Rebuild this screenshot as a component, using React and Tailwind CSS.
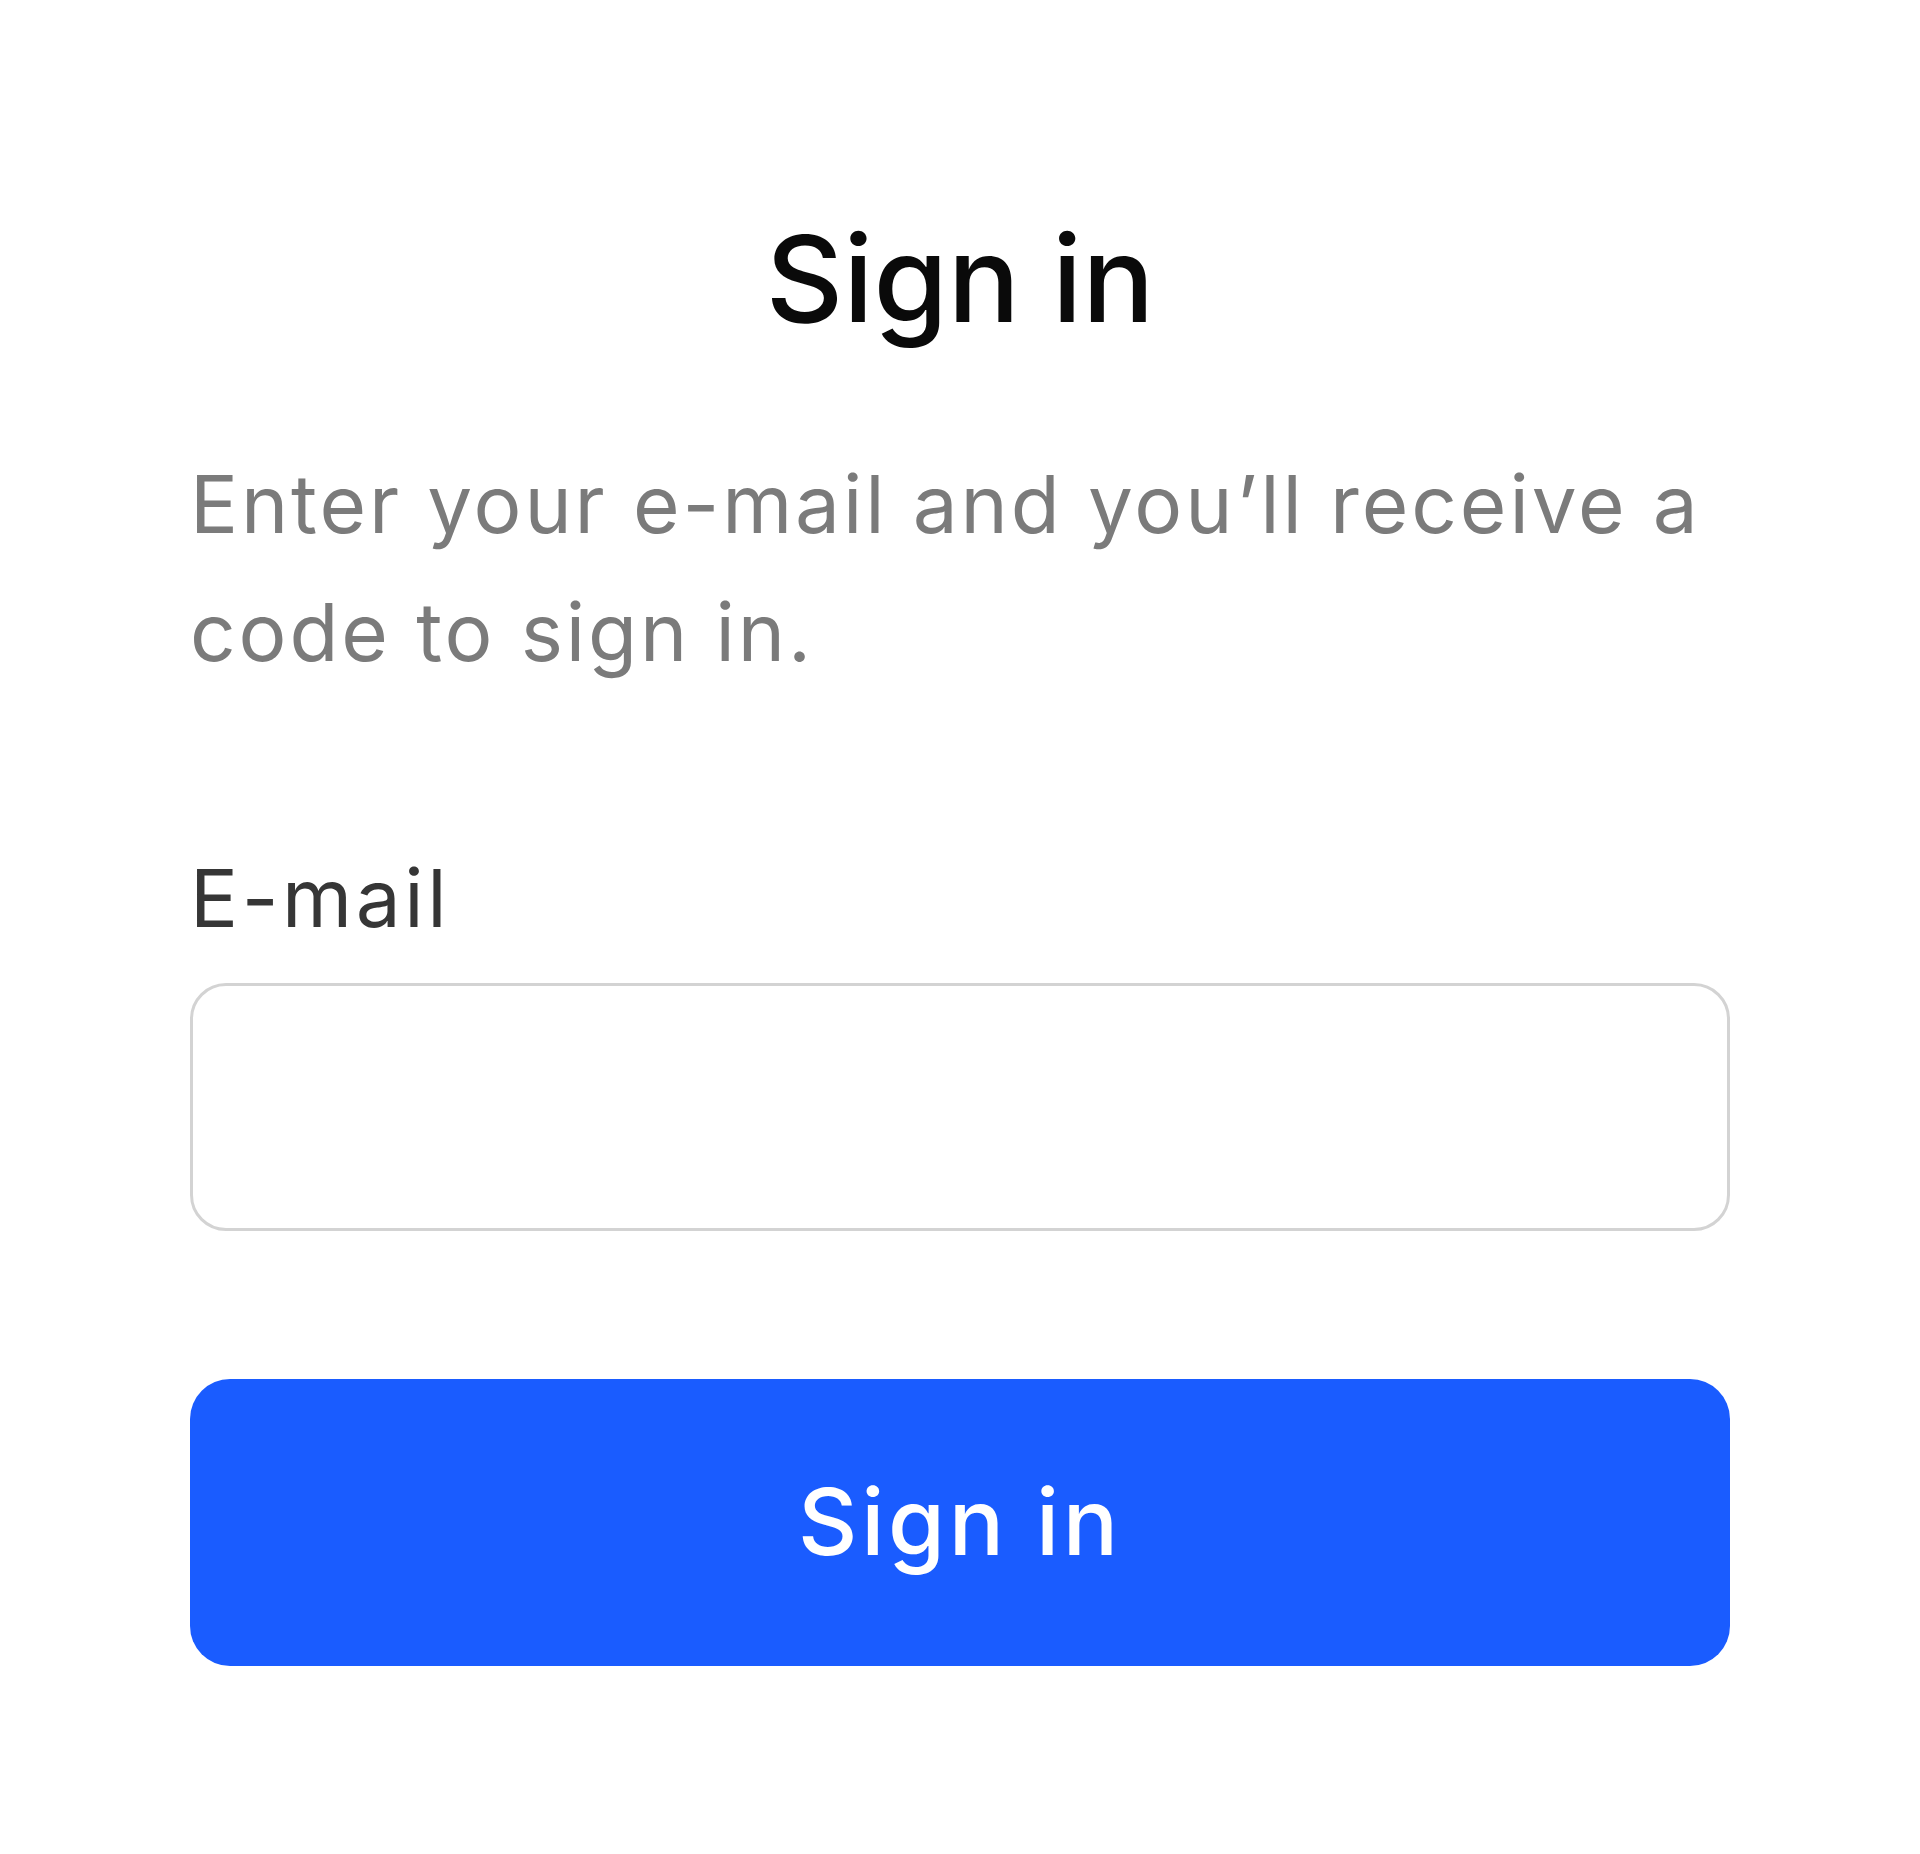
export default function App() {
  return (
    <div className="min-h-[1854px] w-full bg-white font-[Inter,sans-serif] antialiased">
      <div className="flex flex-col px-[190px] pt-[206px]">
        <h1 className="text-center text-[120px] leading-[1.21] font-medium tracking-normal text-[#0a0a0a]">
          Sign in
        </h1>
        <p className="mt-[89px] text-[80px] leading-[128px] tracking-[0.036em] text-[#7b7b7b]">
          Enter your e-mail and you’ll receive a code to sign in.
        </p>
        <label
          htmlFor="email"
          className="mt-[154px] block text-[80px] leading-[1.21] tracking-[0.045em] text-[#363636]"
        >
          E-mail
        </label>
        <input
          id="email"
          type="email"
          className="mt-[36px] h-[248px] w-full rounded-[36px] border-[3px] border-[#d3d3d3] bg-white px-[40px] text-[80px] outline-none"
        />
        <button
          type="button"
          className="mt-[148px] flex h-[287px] w-full items-center justify-center rounded-[40px] bg-[#1a5cff] text-[92px] font-medium tracking-[0.04em] text-white"
        >
          Sign in
        </button>
      </div>
    </div>
  );
}
